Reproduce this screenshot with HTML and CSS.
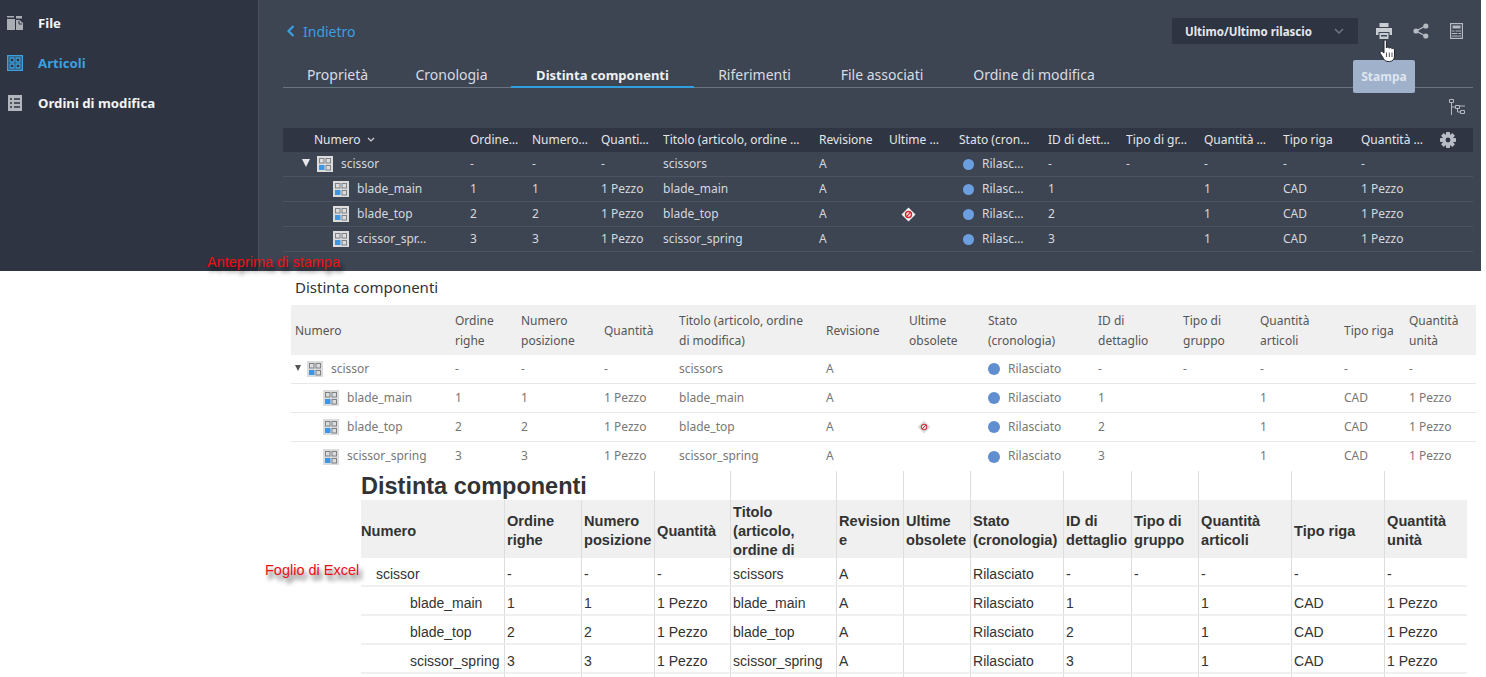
FILE: index.html
```html
<!DOCTYPE html>
<html lang="it">
<head>
<meta charset="utf-8">
<title>Distinta componenti</title>
<link rel="stylesheet" href="styles.css">
</head>
<body>
<svg class="defs" width="0" height="0" aria-hidden="true">
  <symbol id="item" viewBox="0 0 16 16">
    <rect width="16" height="16" fill="#dcdcdc"/>
    <rect x="2.5" y="2.5" width="4.5" height="4.5" fill="none" stroke="#7d8188"/>
    <rect x="9" y="2.5" width="4.5" height="4.5" fill="none" stroke="#7d8188"/>
    <rect x="2" y="9" width="5.5" height="5" fill="#3f95e0"/>
    <rect x="9" y="9.5" width="4.5" height="4.5" fill="none" stroke="#7d8188"/>
  </symbol>
  <symbol id="obs-dark" viewBox="0 0 16 16">
    <path d="M8 .5 15.5 8 8 15.5.5 8z" fill="#f1f1f1"/>
    <circle cx="8" cy="8" r="3.2" fill="none" stroke="#d0262c" stroke-width="1.5"/>
    <path d="M5.8 10.2 10.2 5.8" stroke="#d0262c" stroke-width="1.3"/>
  </symbol>
  <symbol id="obs-light" viewBox="0 0 16 16">
    <path d="M8 .5 15.5 8 8 15.5.5 8z" fill="#dedede"/>
    <circle cx="8" cy="8" r="3.2" fill="none" stroke="#c8343a" stroke-width="1.2"/>
    <path d="M5.8 10.2 10.2 5.8" stroke="#c8343a" stroke-width="1.1"/>
  </symbol>
</svg>

<section class="app">
  <nav class="side">
    <a class="side-item">
      <svg class="side-icon" viewBox="0 0 16 16"><path d="M0 1h7v1.500H0zM9 1h6v2.500H9zM0 4h8v11H0zM9 5h3.500L16 8v7H9z" fill="#a9adb4"/><path d="M12 6v3h3" fill="none" stroke="#2e3441"/></svg>
      <span>File</span>
    </a>
    <a class="side-item side-active">
      <svg class="side-icon" viewBox="0 0 16 16"><rect x=".75" y=".75" width="14.500" height="14.500" fill="none" stroke="#3aa0e0" stroke-width="1.500"/><path d="M3 3h4v4H3zM9 3h4v4H9zM3 9h4v4H3zM9 9h4v4H9z" fill="none" stroke="#3aa0e0" stroke-width="1.300"/></svg>
      <span>Articoli</span>
    </a>
    <a class="side-item">
      <svg class="side-icon" viewBox="0 0 16 16"><rect x="1" width="14" height="16" fill="#b2b5bb"/><path d="M3 4h2M7 4h6M3 8h2M7 8h6M3 12h2M7 12h6" stroke="#2e3441" stroke-width="1.400"/></svg>
      <span>Ordini di modifica</span>
    </a>
  </nav>
  <main class="detail">
    <div class="topbar">
      <a class="back">
        <svg class="back-chev" viewBox="0 0 8 12"><path d="M6.500 1 1.500 6l5 5" fill="none" stroke="#3aa0e0" stroke-width="2.200"/></svg>
        Indietro
      </a>
      <div class="tools">
        <div class="select">
          <span>Ultimo/Ultimo rilascio</span>
          <svg class="select-chev" viewBox="0 0 10 6"><path d="M1 1l4 4 4-4" fill="none" stroke="#737a87" stroke-width="1.400"/></svg>
        </div>
        <svg class="tool tool-print" viewBox="0 0 16 16"><path d="M3.500 0h9v4h-9zM0 5h16v7h-2.500V9h-11v3H0z" fill="#c8ccd3"/><path d="M3.500 10h9v6h-9z" fill="#c8ccd3"/><path d="M5 12h6v1.500H5z" fill="#3d4452"/></svg>
        <svg class="tool tool-share" viewBox="0 0 16 16"><path d="M12.500 3 3 8l9.500 5" fill="none" stroke="#b5bac3" stroke-width="1.400"/><circle cx="12.800" cy="3" r="2.600" fill="#b5bac3"/><circle cx="3" cy="8" r="2.600" fill="#b5bac3"/><circle cx="12.800" cy="13" r="2.600" fill="#b5bac3"/></svg>
        <svg class="tool tool-calc" viewBox="0 0 13 16"><rect x=".6" y=".6" width="11.800" height="14.800" fill="none" stroke="#b5bac3" stroke-width="1.200"/><path d="M2.500 2.500h8v3h-8z" fill="#b5bac3"/><path d="M2 8h9M2 10.500h9M2 13h9" stroke="#b5bac3"/><path d="M5 7v3M8 9.500v3" stroke="#3d4452"/></svg>
      </div>
    </div>
    <div class="tabs">
      <a class="tab tab-1">Proprietà</a>
      <a class="tab tab-2">Cronologia</a>
      <a class="tab tab-3 tab-active">Distinta componenti</a>
      <a class="tab tab-4">Riferimenti</a>
      <a class="tab tab-5">File associati</a>
      <a class="tab tab-6">Ordine di modifica</a>
    </div>
    <div class="tree-row">
      <svg class="tree-icon" viewBox="0 0 17 17"><path d="M1.500.5h4v3h-4zM7.500 6.500h4v3h-4zM12.500 11.500h4v3h-4z" fill="none" stroke="#b5bac3"/><path d="M3.500 3.500V16M3.500 8h4M9.500 9.500V13h3M12 7h5" fill="none" stroke="#b5bac3"/></svg>
    </div>
    <table class="bom">
      <colgroup>
        <col class="b1"><col class="b2"><col class="b3"><col class="b4"><col class="b5"><col class="b6"><col class="b7"><col class="b8"><col class="b9"><col class="b10"><col class="b11"><col class="b12"><col class="b13">
      </colgroup>
      <thead>
        <tr>
          <th class="bom-num">Numero <svg class="sort" viewBox="0 0 8 5"><path d="M1 1l3 3 3-3" fill="none" stroke="#cfd3da" stroke-width="1.200"/></svg></th>
          <th>Ordine…</th><th>Numero…</th><th>Quanti…</th><th>Titolo (articolo, ordine …</th><th>Revisione</th><th>Ultime …</th><th>Stato (cron…</th><th>ID di dett…</th><th>Tipo di gr…</th><th>Quantità …</th><th>Tipo riga</th>
          <th class="bom-last">Quantità …
            <svg class="gear" viewBox="0 0 16 16"><g fill="#b9bdc5"><rect x="6" y="0" width="4" height="16" rx=".8"/><rect x="6" y="0" width="4" height="16" rx=".8" transform="rotate(45 8 8)"/><rect x="6" y="0" width="4" height="16" rx=".8" transform="rotate(90 8 8)"/><rect x="6" y="0" width="4" height="16" rx=".8" transform="rotate(135 8 8)"/><circle cx="8" cy="8" r="5.800"/></g><circle cx="8" cy="8" r="2.400" fill="#2f3542"/></svg>
          </th>
        </tr>
      </thead>
      <tbody>
        <tr>
          <td><div class="name name-root"><span class="tri"></span><svg class="item"><use href="#item"/></svg><span>scissor</span></div></td>
          <td>-</td><td>-</td><td>-</td><td>scissors</td><td>A</td><td></td>
          <td><span class="status"><i class="dot"></i>Rilasc…</span></td>
          <td>-</td><td>-</td><td>-</td><td>-</td><td>-</td>
        </tr>
        <tr>
          <td><div class="name name-child"><svg class="item"><use href="#item"/></svg><span>blade_main</span></div></td>
          <td>1</td><td>1</td><td>1 Pezzo</td><td>blade_main</td><td>A</td><td></td>
          <td><span class="status"><i class="dot"></i>Rilasc…</span></td>
          <td>1</td><td></td><td>1</td><td>CAD</td><td>1 Pezzo</td>
        </tr>
        <tr>
          <td><div class="name name-child"><svg class="item"><use href="#item"/></svg><span>blade_top</span></div></td>
          <td>2</td><td>2</td><td>1 Pezzo</td><td>blade_top</td><td>A</td><td><svg class="obs"><use href="#obs-dark"/></svg></td>
          <td><span class="status"><i class="dot"></i>Rilasc…</span></td>
          <td>2</td><td></td><td>1</td><td>CAD</td><td>1 Pezzo</td>
        </tr>
        <tr>
          <td><div class="name name-child"><svg class="item"><use href="#item"/></svg><span>scissor_spr…</span></div></td>
          <td>3</td><td>3</td><td>1 Pezzo</td><td>scissor_spring</td><td>A</td><td></td>
          <td><span class="status"><i class="dot"></i>Rilasc…</span></td>
          <td>3</td><td></td><td>1</td><td>CAD</td><td>1 Pezzo</td>
        </tr>
      </tbody>
    </table>
  </main>
  <div class="tooltip">Stampa</div>
  <svg class="hand" viewBox="0 0 18 24"><path d="M5 1.500c1.200-1 2.400-.3 2.400 1V9c.3-1.300 2.700-1.300 2.900.3.400-1.200 2.500-1 2.700.5.600-.9 2.500-.6 2.500 1.200v6c0 3-1.800 5.500-5 5.500H9c-2.300 0-3.500-1.200-4.500-3L1.300 14.500c-.9-1.500.8-3 2.200-1.800L5 14z" fill="#fff" stroke="#20242c" stroke-width="1"/><path d="M7.500 13.500V18M10.300 13.500V18M13 13.500V18" stroke="#20242c" stroke-width=".8"/></svg>
</section>

<section class="print">
  <span class="note note-print">Anteprima di stampa</span>
  <h2 class="print-title">Distinta componenti</h2>
  <table class="preview">
    <colgroup>
      <col class="p1"><col class="p2"><col class="p3"><col class="p4"><col class="p5"><col class="p6"><col class="p7"><col class="p8"><col class="p9"><col class="p10"><col class="p11"><col class="p12"><col class="p13">
    </colgroup>
    <thead>
      <tr>
        <th>Numero</th><th>Ordine<br>righe</th><th>Numero<br>posizione</th><th>Quantità</th><th>Titolo (articolo, ordine<br>di modifica)</th><th>Revisione</th><th>Ultime<br>obsolete</th><th>Stato<br>(cronologia)</th><th>ID di<br>dettaglio</th><th>Tipo di<br>gruppo</th><th>Quantità<br>articoli</th><th>Tipo riga</th><th>Quantità<br>unità</th>
      </tr>
    </thead>
    <tbody>
      <tr>
        <td><div class="name"><span class="tri tri-small"></span><svg class="item"><use href="#item"/></svg><span>scissor</span></div></td>
        <td>-</td><td>-</td><td>-</td><td>scissors</td><td>A</td><td></td>
        <td><span class="status pstatus"><i class="dot"></i>Rilasciato</span></td>
        <td>-</td><td>-</td><td>-</td><td>-</td><td>-</td>
      </tr>
      <tr>
        <td><div class="name name-pchild"><svg class="item"><use href="#item"/></svg><span>blade_main</span></div></td>
        <td>1</td><td>1</td><td>1 Pezzo</td><td>blade_main</td><td>A</td><td></td>
        <td><span class="status pstatus"><i class="dot"></i>Rilasciato</span></td>
        <td>1</td><td></td><td>1</td><td>CAD</td><td>1 Pezzo</td>
      </tr>
      <tr>
        <td><div class="name name-pchild"><svg class="item"><use href="#item"/></svg><span>blade_top</span></div></td>
        <td>2</td><td>2</td><td>1 Pezzo</td><td>blade_top</td><td>A</td><td><svg class="obs obs-p"><use href="#obs-light"/></svg></td>
        <td><span class="status pstatus"><i class="dot"></i>Rilasciato</span></td>
        <td>2</td><td></td><td>1</td><td>CAD</td><td>1 Pezzo</td>
      </tr>
      <tr>
        <td><div class="name name-pchild"><svg class="item"><use href="#item"/></svg><span>scissor_spring</span></div></td>
        <td>3</td><td>3</td><td>1 Pezzo</td><td>scissor_spring</td><td>A</td><td></td>
        <td><span class="status pstatus"><i class="dot"></i>Rilasciato</span></td>
        <td>3</td><td></td><td>1</td><td>CAD</td><td>1 Pezzo</td>
      </tr>
    </tbody>
  </table>
</section>

<section class="excel">
  <span class="note note-excel">Foglio di Excel</span>
  <table class="sheet">
    <colgroup>
      <col class="e1"><col class="e2"><col class="e3"><col class="e4"><col class="e5"><col class="e6"><col class="e7"><col class="e8"><col class="e9"><col class="e10"><col class="e11"><col class="e12"><col class="e13">
    </colgroup>
    <thead>
      <tr class="sheet-title">
        <th colspan="3">Distinta componenti</th><th></th><th></th><th></th><th></th><th></th><th></th><th></th><th></th><th></th><th></th>
      </tr>
      <tr class="sheet-head">
        <th class="sheet-num">Numero</th><th>Ordine righe</th><th>Numero posizione</th><th>Quantità</th><th class="sheet-long"><div class="long">Titolo (articolo, ordine di</div></th><th>Revisione</th><th>Ultime obsolete</th><th>Stato (cronologia)</th><th>ID di dettaglio</th><th>Tipo di gruppo</th><th>Quantità articoli</th><th>Tipo riga</th><th>Quantità unità</th>
      </tr>
    </thead>
    <tbody>
      <tr>
        <td class="lvl-0">scissor</td><td>-</td><td>-</td><td>-</td><td>scissors</td><td>A</td><td></td><td>Rilasciato</td><td>-</td><td>-</td><td>-</td><td>-</td><td>-</td>
      </tr>
      <tr>
        <td class="lvl-1">blade_main</td><td>1</td><td>1</td><td>1 Pezzo</td><td>blade_main</td><td>A</td><td></td><td>Rilasciato</td><td>1</td><td></td><td>1</td><td>CAD</td><td>1 Pezzo</td>
      </tr>
      <tr>
        <td class="lvl-1">blade_top</td><td>2</td><td>2</td><td>1 Pezzo</td><td>blade_top</td><td>A</td><td></td><td>Rilasciato</td><td>2</td><td></td><td>1</td><td>CAD</td><td>1 Pezzo</td>
      </tr>
      <tr>
        <td class="lvl-1">scissor_spring</td><td>3</td><td>3</td><td>1 Pezzo</td><td>scissor_spring</td><td>A</td><td></td><td>Rilasciato</td><td>3</td><td></td><td>1</td><td>CAD</td><td>1 Pezzo</td>
      </tr>
      <tr>
        <td></td><td></td><td></td><td></td><td></td><td></td><td></td><td></td><td></td><td></td><td></td><td></td><td></td>
      </tr>
    </tbody>
  </table>
</section>
</body>
</html>
```

FILE: styles.css
```css
* { box-sizing: border-box; }

html, body {
  margin: 0;
  height: 677px;
  overflow: hidden;
  background: #fff;
}

body {
  position: relative;
  font-family: "Noto Sans", sans-serif;
}

.defs { position: absolute; }

table {
  table-layout: fixed;
  border-collapse: separate;
  border-spacing: 0;
}

th, td {
  padding: 0;
  text-align: left;
  white-space: nowrap;
  overflow: hidden;
}

/* ---------- dark application ---------- */
.app {
  position: relative;
  display: flex;
  width: 1481px;
  height: 271px;
  overflow: hidden;
  background: #3d4452;
}

.side {
  flex: 0 0 259px;
  padding-top: 3px;
  background: #2e3441;
  border-right: 1px solid #4a505d;
}

.side-item {
  display: flex;
  align-items: center;
  gap: 15px;
  height: 40px;
  padding-left: 7px;
  font-size: 13.2px;
  font-weight: 700;
  color: #f2f3f5;
}

.side-active { color: #3aa0e0; }

.side-icon { width: 16px; height: 16px; flex: none; }

.detail {
  flex: 1;
  padding: 18px 8px 0 24px;
}

.topbar {
  display: flex;
  align-items: center;
  justify-content: space-between;
  height: 26px;
}

.back {
  display: flex;
  align-items: center;
  gap: 8px;
  padding-left: 4px;
  font-size: 14px;
  color: #3aa0e0;
}

.back-chev { width: 8px; height: 12px; }

.tools {
  display: flex;
  align-items: center;
  padding-right: 10px;
}

.select {
  display: flex;
  align-items: center;
  justify-content: space-between;
  width: 186px;
  height: 26px;
  padding: 0 13px;
  background: #2e3441;
  font-size: 11.5px;
  font-weight: 700;
  color: #e6e8ec;
}

.select-chev { width: 10px; height: 6px; margin-right: 1px; }

.tool { flex: none; height: 16px; }
.tool-print { width: 16px; margin-left: 18px; }
.tool-share { width: 16px; margin-left: 21px; }
.tool-calc { width: 13px; margin-left: 21px; }

.tabs {
  display: flex;
  height: 26px;
  margin-top: 18px;
  border-bottom: 1px solid #6d7481;
}

.tab {
  height: 26px;
  padding-top: 4px;
  font-size: 14px;
  line-height: 18px;
  color: #d9dce2;
  text-align: center;
}

.tab-1 { width: 109px; }
.tab-2 { width: 119px; }
.tab-3 { width: 183px; }
.tab-4 { width: 121px; }
.tab-5 { width: 134px; }
.tab-6 { width: 170px; }

.tab-active {
  font-size: 13px;
  font-weight: 700;
  color: #eef0f3;
  border-bottom: 2px solid #2f9fe0;
}

.tree-row {
  display: flex;
  justify-content: flex-end;
  height: 40px;
  padding: 11px 8px 0 0;
}

.tree-icon { width: 17px; height: 17px; }

.bom {
  width: 1190px;
  font-size: 12px;
  color: #d5d8de;
}

.b1 { width: 187px; }
.b2 { width: 62px; }
.b3 { width: 69px; }
.b4 { width: 62px; }
.b5 { width: 156px; }
.b6 { width: 70px; }
.b7 { width: 70px; }
.b8 { width: 89px; }
.b9 { width: 78px; }
.b10 { width: 78px; }
.b11 { width: 79px; }
.b12 { width: 78px; }
.b13 { width: 112px; }

.bom th {
  height: 24px;
  padding-bottom: 2px;
  background: #2f3542;
  font-weight: 400;
  color: #e3e6ea;
}

.bom th.bom-num { padding-left: 31px; }

.bom td {
  height: 25px;
  padding-bottom: 2px;
  border-bottom: 1px solid #4b5261;
}

.sort { width: 8px; height: 5px; margin-left: 3px; vertical-align: 2px; }

.bom-last { position: relative; }

.gear {
  position: absolute;
  right: 17px;
  top: 4px;
  width: 16px;
  height: 16px;
}

.name { display: flex; align-items: center; }
.name .item { margin: 2px 8px 0 0; }
.name-root { padding-left: 19px; }
.name-child { padding-left: 50px; }

.item { width: 16px; height: 16px; flex: none; }

.tri {
  width: 0;
  height: 0;
  margin-right: 7px;
  border-left: 4px solid transparent;
  border-right: 4px solid transparent;
  border-top: 8px solid #e6e8ec;
}

.tri-small {
  margin-right: 6px;
  border-left-width: 3px;
  border-right-width: 3px;
  border-top: 6px solid #555;
}

.status { display: flex; align-items: center; padding-left: 4px; }

.dot {
  width: 11px;
  height: 11px;
  margin: 2px 8px 0 0;
  border-radius: 50%;
  background: #6c9fe0;
  flex: none;
}

.obs {
  display: block;
  width: 15px;
  height: 15px;
  margin: 2px 0 0 12px;
}

.tooltip {
  position: absolute;
  left: 1353px;
  top: 60px;
  width: 62px;
  height: 33px;
  border-radius: 2px;
  background: #a0b1cb;
  font-size: 12px;
  font-weight: 700;
  line-height: 33px;
  text-align: center;
  color: #dfe5ee;
}

.hand {
  position: absolute;
  left: 1379px;
  top: 39px;
  width: 18px;
  height: 24px;
}

/* ---------- annotations ---------- */
.note {
  position: absolute;
  z-index: 2;
  font-family: "Liberation Sans", sans-serif;
  font-size: 14.5px;
  color: #ee0f12;
  text-shadow: 3px 5px 4px rgba(0, 0, 0, .65);
  white-space: nowrap;
}

.note-print { left: 207px; top: -17px; }
.note-excel { left: 265px; top: 91px; }

/* ---------- print preview ---------- */
.print {
  position: relative;
  height: 200px;
  padding: 7px 0 0 291px;
}

.print-title {
  height: 27px;
  margin: 0;
  padding-left: 4px;
  font-size: 15px;
  font-weight: 400;
  line-height: 18px;
  color: #333;
}

.preview {
  width: 1185px;
  font-size: 12px;
  color: #777;
}

.p1 { width: 160px; }
.p2 { width: 66px; }
.p3 { width: 83px; }
.p4 { width: 75px; }
.p5 { width: 147px; }
.p6 { width: 83px; }
.p7 { width: 79px; }
.p8 { width: 110px; }
.p9 { width: 85px; }
.p10 { width: 77px; }
.p11 { width: 84px; }
.p12 { width: 65px; }
.p13 { width: 71px; }

.preview th {
  height: 50px;
  padding: 1px 0 0 4px;
  background: #f0f0f0;
  font-weight: 400;
  line-height: 20px;
  color: #555;
}

.preview td {
  height: 29px;
  padding: 0 0 2px 4px;
  border-bottom: 1px solid #e8e8e8;
}

.preview tbody tr:last-child td { border-bottom: 0; }

.name-pchild { padding-left: 28px; }

.pstatus { padding-left: 0; }
.pstatus .dot { width: 12px; height: 12px; background: #5f8fd0; }

.obs-p { width: 14px; height: 14px; margin-left: 8px; }

/* ---------- excel sheet ---------- */
.excel {
  position: relative;
  height: 206px;
  padding-left: 361px;
  overflow: hidden;
}

.sheet {
  width: 1106px;
  font-family: "Liberation Sans", sans-serif;
  font-size: 14px;
  color: #333;
}

.e1 { width: 143px; }
.e2 { width: 77px; }
.e3 { width: 73px; }
.e4 { width: 76px; }
.e5 { width: 106px; }
.e6 { width: 67px; }
.e7 { width: 67px; }
.e8 { width: 93px; }
.e9 { width: 68px; }
.e10 { width: 67px; }
.e11 { width: 93px; }
.e12 { width: 93px; }
.e13 { width: 83px; }

.sheet td, .sheet th { border-left: 1px solid #ddd; padding-left: 2px; }
.sheet tr > :first-child { border-left: 0; }

.sheet-title th {
  height: 29px;
  padding: 2px 0 0;
  font-size: 23.5px;
  line-height: 27px;
}

.sheet-head th {
  height: 58px;
  padding-top: 4px;
  background: #f0f0f0;
  font-size: 14.6px;
  line-height: 19px;
  white-space: normal;
  overflow-wrap: anywhere;
}

.sheet-head .sheet-num { padding-left: 0; }

.sheet-head .sheet-long {
  padding-top: 3px;
  overflow: visible;
}

.long { height: 55px; }

.sheet td {
  height: 29px;
  padding-top: 4px;
  border-bottom: 2px solid #f0f0f0;
}

.sheet .lvl-0 { padding-left: 15px; }
.sheet .lvl-1 { padding-left: 49px; }
```
